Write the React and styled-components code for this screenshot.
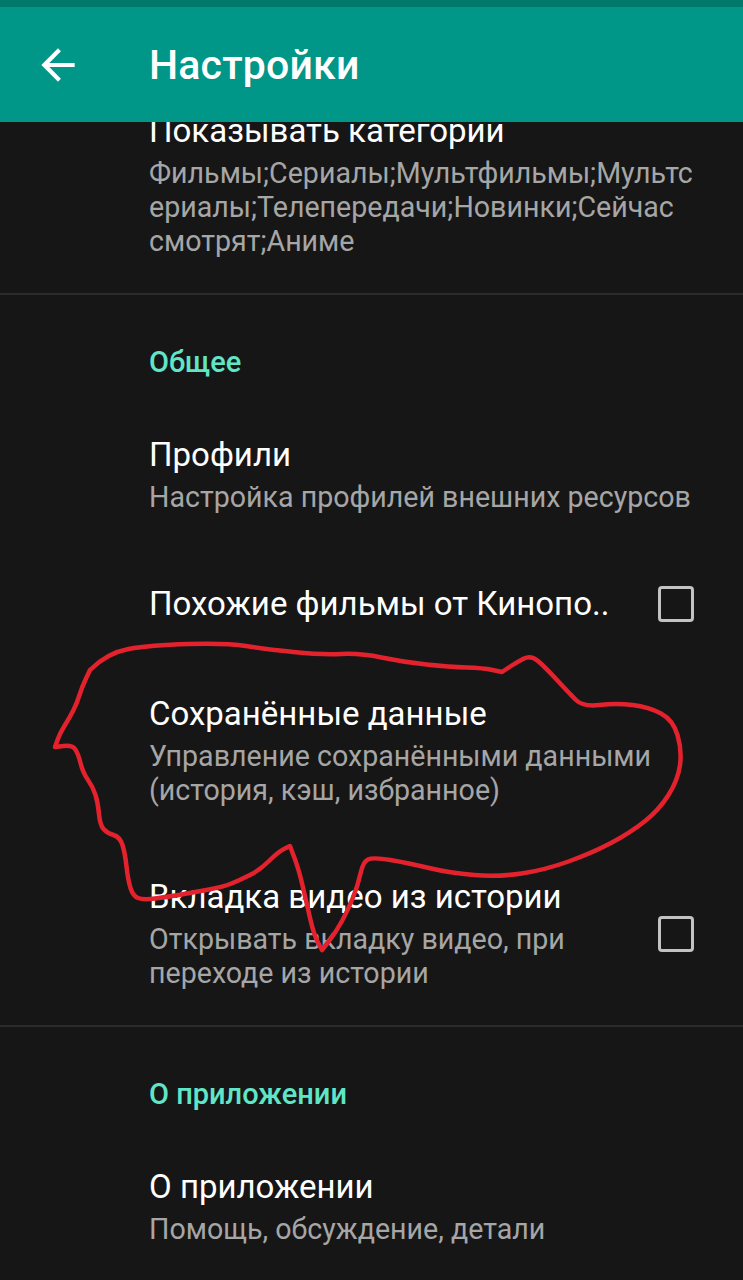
import React from 'react'
import styled, { createGlobalStyle } from 'styled-components'

const GlobalStyle = createGlobalStyle`
  html, body {
    margin: 0;
    padding: 0;
    background: #161616;
  }
  body {
    font-family: Roboto, "Noto Sans", "Liberation Sans", sans-serif;
  }
`

const Page = styled.div`
  position: relative;
  width: 100%;
  height: 1280px;
  overflow: hidden;
  background: #161616;
`

const StatusBar = styled.div`
  height: 7px;
  background: #00796b;
`

const AppBar = styled.header`
  position: relative;
  z-index: 1;
  height: 115px;
  display: flex;
  align-items: center;
  background: #009688;
`

const BackButton = styled.div`
  width: 50px;
  height: 50px;
  margin-left: 33px;
  display: flex;
  align-items: center;
  justify-content: center;
`

const AppTitle = styled.h1`
  margin: 0 0 0 66px;
  font-size: 41px;
  font-weight: 500;
  color: #ffffff;
  letter-spacing: 0.2px;
`

const List = styled.div`
  margin-top: -46px;
`

const Item = styled.div`
  display: flex;
  align-items: center;
  gap: 24px;
  padding: 35px 49px 35px 149px;
`

const ItemText = styled.div`
  flex: 1;
  min-width: 0;
`

const ItemTitle = styled.div`
  font-size: 33px;
  line-height: 40px;
  color: #ffffff;
  white-space: nowrap;
`

const ItemSummary = styled.div`
  margin-top: 5px;
  font-size: 28.6px;
  line-height: 34px;
  color: #a6a6a6;
  white-space: nowrap;
`

const Checkbox = styled.div`
  flex-shrink: 0;
  width: 36px;
  height: 36px;
  box-sizing: border-box;
  border: 3.5px solid #c2c2c2;
  border-radius: 4px;
`

const Divider = styled.div`
  height: 2px;
  background: #2b2b2b;
`

const SectionHeader = styled.div`
  padding: 50px 0 21px 149px;
  font-size: 29px;
  line-height: 34px;
  font-weight: 500;
  color: #60e6c6;
`

const Scribble = styled.svg`
  position: absolute;
  left: 0;
  top: 0;
  pointer-events: none;
`

// hand-drawn red loop; repeated points stay sharp
const scribblePoints = [
  [90, 670], [107, 653], [150, 645], [227, 643], [265, 649], [322, 655],
  [360, 653], [403, 662], [450, 667], [483, 668], [502, 672], [502, 672],
  [517, 662], [531, 655], [545, 667], [569, 693], [583, 707], [616, 703],
  [649, 707], [673, 720], [682, 750], [678, 780], [659, 810], [630, 833],
  [592, 853], [545, 870], [498, 877], [450, 873], [408, 863], [373, 857],
  [363, 862], [358, 885], [348, 910], [336, 932], [322, 950], [322, 950],
  [314, 935], [307, 905], [299, 870], [290, 846], [290, 846], [278, 852],
  [260, 870], [240, 880], [223, 887], [190, 893], [167, 897], [143, 900],
  [133, 896], [128, 880], [125, 853], [120, 837], [107, 833], [100, 825],
  [98, 803], [93, 787], [83, 773], [78, 753], [72, 745], [55, 747],
  [55, 747], [60, 733], [70, 717], [77, 703], [82, 687], [90, 670],
]

const scribblePath = (() => {
  const p = scribblePoints
  let d = `M${p[0][0]} ${p[0][1]}`
  for (let i = 1; i < p.length - 1; i++) {
    const mx = (p[i][0] + p[i + 1][0]) / 2
    const my = (p[i][1] + p[i + 1][1]) / 2
    d += ` Q${p[i][0]} ${p[i][1]} ${mx} ${my}`
  }
  const last = p[p.length - 1]
  d += ` L${last[0]} ${last[1]}`
  return d
})()

const Pref = ({ title, summary, checkbox }) => (
  <Item>
    <ItemText>
      <ItemTitle>{title}</ItemTitle>
      {summary && (
        <ItemSummary>
          {summary.map((line, i) => (
            <React.Fragment key={i}>
              {i > 0 && <br />}
              {line}
            </React.Fragment>
          ))}
        </ItemSummary>
      )}
    </ItemText>
    {checkbox && <Checkbox />}
  </Item>
)

export default function App() {
  return (
    <>
      <GlobalStyle />
      <Page>
        <StatusBar />
        <AppBar>
          <BackButton>
            <svg width="50" height="50" viewBox="0 0 24 24" fill="#ffffff">
              <path d="M20 11H7.83l5.59-5.59L12 4l-8 8 8 8 1.41-1.41L7.83 13H20v-2z" />
            </svg>
          </BackButton>
          <AppTitle>Настройки</AppTitle>
        </AppBar>
        <List>
          <Pref
            title="Показывать категории"
            summary={[
              'Фильмы;Сериалы;Мультфильмы;Мультс',
              'ериалы;Телепередачи;Новинки;Сейчас',
              'смотрят;Аниме',
            ]}
          />
          <Divider />
          <SectionHeader>Общее</SectionHeader>
          <Pref title="Профили" summary={['Настройка профилей внешних ресурсов']} />
          <Pref title="Похожие фильмы от Кинопо.." checkbox />
          <Pref
            title="Сохранённые данные"
            summary={['Управление сохранёнными данными', '(история, кэш, избранное)']}
          />
          <Pref
            title="Вкладка видео из истории"
            summary={['Открывать вкладку видео, при', 'переходе из истории']}
            checkbox
          />
          <Divider />
          <SectionHeader>О приложении</SectionHeader>
          <Pref title="О приложении" summary={['Помощь, обсуждение, детали']} />
        </List>
        <Scribble width="743" height="1280" viewBox="0 0 743 1280">
          <path
            d={scribblePath}
            fill="none"
            stroke="#e3222e"
            strokeWidth="4.5"
            strokeLinejoin="round"
            strokeLinecap="round"
          />
        </Scribble>
      </Page>
    </>
  )
}
